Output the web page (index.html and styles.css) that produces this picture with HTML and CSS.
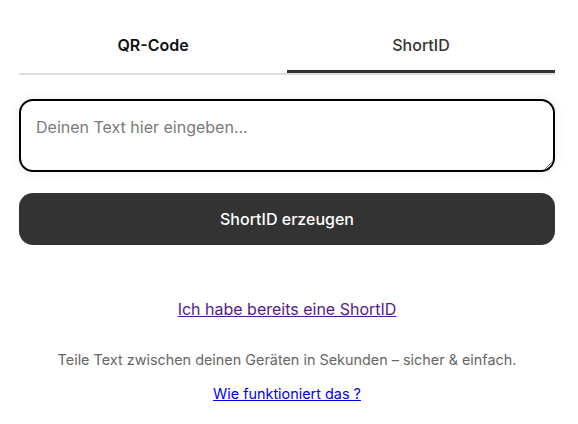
FILE: index.html
```html
<!DOCTYPE html>
<html lang="de">
<head>
<meta charset="utf-8">
<link rel="stylesheet" href="styles.css">
</head>
<body>
<main class="app">
  <nav class="tabs">
    <div class="tab">QR-Code</div>
    <div class="tab active">ShortID</div>
  </nav>
  <textarea class="input" placeholder="Deinen Text hier eingeben..." autofocus></textarea>
  <button class="btn">ShortID erzeugen</button>
  <a class="have-id" href="#">Ich habe bereits eine ShortID</a>
  <p class="info">Teile Text zwischen deinen Geräten in Sekunden – sicher &amp; einfach.</p>
  <a class="how" href="#">Wie funktioniert das ?</a>
</main>
</body>
</html>
```
FILE: styles.css
```css
html, body {
  margin: 0;
  padding: 0;
  background: #fff;
}
body {
  font-family: Inter, "Noto Sans", sans-serif;
}
.app {
  width: 536px;
  margin: 0 0 0 19px;
  padding-top: 16px;
  display: flex;
  flex-direction: column;
}
.tabs {
  display: flex;
  border-bottom: 2px solid #dcdcdc;
}
.tab {
  flex: 1;
  text-align: center;
  font-size: 16px;
  font-weight: 600;
  color: #111;
  height: 57px;
  line-height: 58px;
  box-sizing: border-box;
}
.tab.active {
  color: #333;
  font-weight: 500;
  border-bottom: 3px solid #333;
}
.input {
  margin-top: 24px;
  height: 73px;
  box-sizing: border-box;
  border: 2px solid #000;
  border-radius: 14px;
  padding: 14px 15px;
  font-family: Inter, "Noto Sans", sans-serif;
  font-size: 16px;
  line-height: 24px;
  color: #222;
  box-shadow: 0 0 12px rgba(0,0,0,0.08);
  outline: none;
  caret-color: #000;
}
.input::placeholder {
  color: #7a7a7a;
}
.btn {
  margin-top: 21px;
  height: 52px;
  border: none;
  border-radius: 14px;
  background: #333;
  color: #fff;
  font-family: Inter, "Noto Sans", sans-serif;
  font-size: 16px;
  font-weight: 500;
}
.have-id {
  align-self: center;
  margin-top: 52px;
  font-size: 16px;
  line-height: 24px;
  color: #551a8b;
}
.info {
  margin: 29px 0 0;
  text-align: center;
  font-size: 14.4px;
  line-height: 20px;
  color: #666;
}
.how {
  align-self: center;
  margin-top: 14px;
  font-size: 14.4px;
  line-height: 20px;
  color: #0000ee;
}
```
